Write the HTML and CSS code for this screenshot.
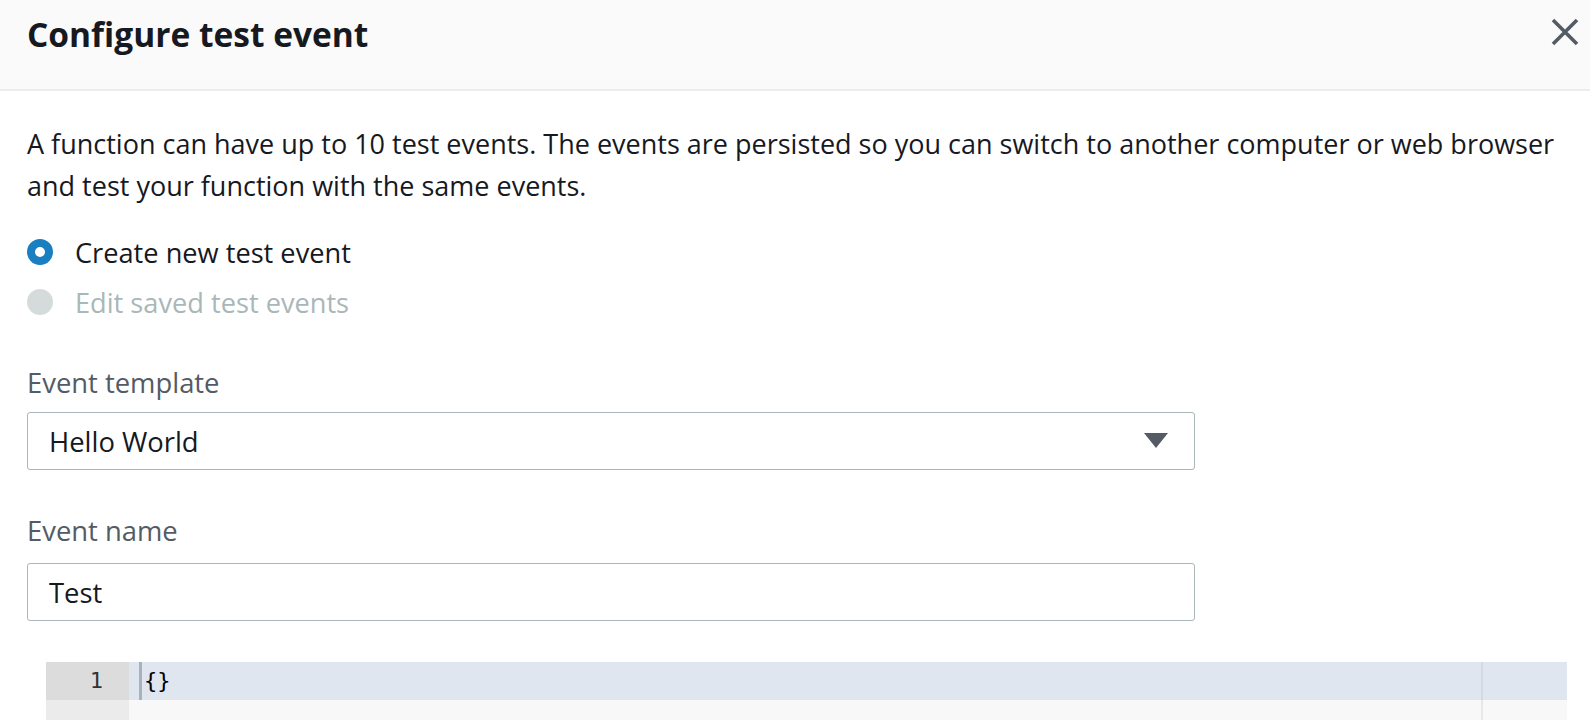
FILE: index.html
```html
<!DOCTYPE html>
<html>
<head>
<meta charset="utf-8">
<link rel="stylesheet" href="styles.css">
</head>
<body>
<div class="modal">
  <div class="modal-header">
    <h1 class="title">Configure test event</h1>
    <button class="close" aria-label="Close">
      <svg width="28" height="28" viewBox="0 0 28 28"><path d="M2 2 L26 26 M26 2 L2 26" stroke="#545b64" stroke-width="3.6" fill="none"/></svg>
    </button>
  </div>
  <div class="modal-body">
    <p class="desc">A function can have up to 10 test events. The events are persisted so you can switch to another computer or web browser and test your function with the same events.</p>
    <div class="radios">
      <label class="radio-row"><span class="radio checked"></span><span class="radio-text">Create new test event</span></label>
      <label class="radio-row disabled"><span class="radio"></span><span class="radio-text">Edit saved test events</span></label>
    </div>
    <div class="field first">
      <div class="field-label">Event template</div>
      <div class="select">
        <span class="select-value">Hello World</span>
        <svg class="caret" width="24" height="16" viewBox="0 0 24 16"><path d="M0 0 H24 L12 15 Z" fill="#545b64"/></svg>
      </div>
    </div>
    <div class="field">
      <div class="field-label">Event name</div>
      <div class="input name-input">Test</div>
    </div>
    <div class="editor">
      <div class="editor-line active">
        <div class="gutter-cell">1</div>
        <div class="code-cell"><span class="cursor"></span><span class="code">{}</span></div>
        <div class="margin-cell"></div>
      </div>
      <div class="editor-line">
        <div class="gutter-cell"></div>
        <div class="code-cell"></div>
        <div class="margin-cell"></div>
      </div>
    </div>
  </div>
</div>
</body>
</html>
```
FILE: styles.css
```css
* { box-sizing: border-box; }
html, body { margin: 0; padding: 0; background: #ffffff; }
body {
  font-family: "Open Sans", "Noto Sans", sans-serif;
  color: #16191f;
  overflow: hidden;
  width: 1590px;
  height: 720px;
}
.modal-header {
  height: 91px;
  background: #fafafa;
  border-bottom: 2px solid #eaeded;
  display: flex;
  align-items: flex-start;
  justify-content: space-between;
  padding: 0 11px 0 27px;
}
.title {
  margin: 11px 0 0 0;
  font-size: 33.5px;
  line-height: 46px;
  font-weight: 700;
  color: #16191f;
}
.close {
  margin-top: 18px;
  border: 0;
  background: transparent;
  padding: 0;
  width: 28px;
  height: 28px;
}
.close svg { display: block; }
.modal-body { padding: 32px 0 0 27px; }
.desc {
  margin: 0;
  font-size: 27px;
  line-height: 42px;
  color: #16191f;
}
.radios { margin-top: 20px; }
.radio-row {
  display: flex;
  align-items: center;
  height: 50px;
  font-size: 27.2px;
}
.radio {
  width: 26px;
  height: 26px;
  border-radius: 50%;
  background: #d5dbdb;
  margin-right: 22px;
  flex: none;
}
.radio.checked {
  background: #ffffff;
  border: 8px solid #1a7fc1;
}
.radio-row.disabled .radio-text { color: #aab7b8; }
.field { margin-top: 40px; }
.field.first { margin-top: 35px; }
.field-label {
  font-size: 27.4px;
  line-height: 42px;
  color: #545b64;
}
.select, .input {
  width: 1168px;
  height: 58px;
  border: 1px solid #aab7b8;
  border-radius: 3px;
  margin-top: 8px;
  display: flex;
  align-items: center;
  padding-left: 21px;
  font-size: 27.4px;
  color: #16191f;
}
.name-input { margin-top: 11px; }
.select { justify-content: space-between; padding-right: 26px; }
.caret { display: block; }
.editor { margin: 41px 0 0 19px; width: 1521px; }
.editor-line { display: flex; height: 38px; }
.gutter-cell {
  width: 83px;
  background: #ebebeb;
  font-family: "DejaVu Sans Mono", monospace;
  font-size: 22px;
  line-height: 38px;
  text-align: right;
  padding-right: 26px;
  color: #333333;
}
.code-cell {
  width: 1354px;
  background: #f8f8f8;
  display: flex;
  align-items: stretch;
  padding-left: 10px;
  border-right: 2px solid #e8e8e8;
}
.margin-cell { flex: 1; background: #f8f8f8; }
.editor-line.active .gutter-cell { background: #dcdcdc; }
.editor-line.active .code-cell { background: #e0e6f0; border-right-color: #d3dae6; }
.editor-line.active .margin-cell { background: #e0e6f0; }
.cursor { width: 3px; background: #a9b1bd; margin-right: 2px; }
.code {
  font-family: "DejaVu Sans Mono", monospace;
  font-size: 22px;
  line-height: 38px;
  color: #000;
}
```
